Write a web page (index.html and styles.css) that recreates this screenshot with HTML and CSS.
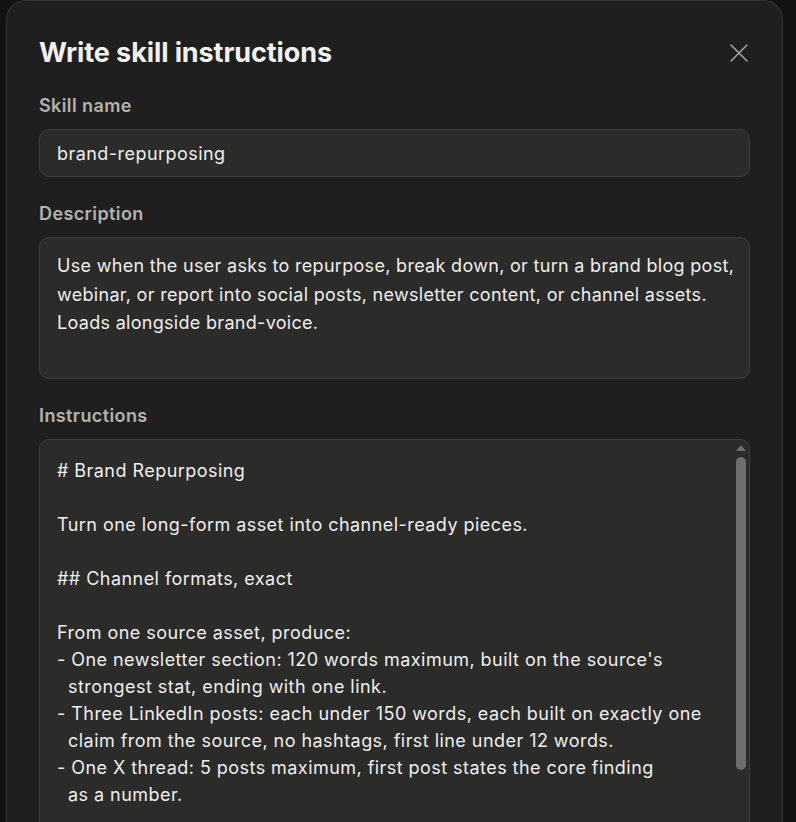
FILE: index.html
```html
<!DOCTYPE html>
<html lang="en">
<head>
    <meta charset="UTF-8">
    <title>Write skill instructions</title>
    <link rel="stylesheet" href="styles.css">
</head>
<body>
    <div class="modal">
        <div class="modal-header">
            <h1>Write skill instructions</h1>
            <button class="close-btn" aria-label="Close">
                <svg width="20" height="20" viewBox="0 0 20 20" fill="none" stroke="currentColor" stroke-width="1.5" stroke-linecap="round">
                    <path d="M2 2 L18 18 M18 2 L2 18"/>
                </svg>
            </button>
        </div>

        <label class="field-label" for="skillName">Skill name</label>
        <input id="skillName" class="field-input" type="text" value="brand-repurposing">

        <label class="field-label" for="skillDesc">Description</label>
        <textarea id="skillDesc" class="field-input desc">Use when the user asks to repurpose, break down, or turn a brand blog post, webinar, or report into social posts, newsletter content, or channel assets. Loads alongside brand-voice.</textarea>

        <label class="field-label" for="skillBody">Instructions</label>
        <div class="scroll-box">
            <textarea id="skillBody" class="field-input instructions"># Brand Repurposing

Turn one long-form asset into channel-ready pieces.

## Channel formats, exact

From one source asset, produce:
- One newsletter section: 120 words maximum, built on the source's
  strongest stat, ending with one link.
- Three LinkedIn posts: each under 150 words, each built on exactly one
  claim from the source, no hashtags, first line under 12 words.
- One X thread: 5 posts maximum, first post states the core finding
  as a number.

## Rules

- Never invent a stat that is not in the source.
- Keep the brand voice; load brand-voice first.
- Mark any claim that needs a citation.</textarea>
            <div class="scrollbar">
                <div class="scroll-arrow"></div>
                <div class="scroll-thumb"></div>
            </div>
        </div>
    </div>
</body>
</html>
```

FILE: styles.css
```css
body {
    margin: 0;
    background-color: #131313;
    font-family: 'Inter', 'Noto Sans', sans-serif;
    color: #ececec;
    height: 822px;
    overflow: hidden;
}
.modal {
    margin-left: 6px;
    width: 777px;
    height: 900px;
    box-sizing: border-box;
    padding: 0 32px;
    background-color: #1f1f1f;
    border: 1px solid #343434;
    border-bottom: none;
    border-radius: 20px 20px 0 0;
    display: flex;
    flex-direction: column;
}
.modal-header {
    display: flex;
    align-items: center;
    justify-content: space-between;
    padding-top: 35px;
    margin-bottom: 26px;
}
.modal-header h1 {
    margin: 0;
    font-size: 27px;
    font-weight: 700;
    color: #f2f2f2;
    letter-spacing: -0.1px;
}
.close-btn {
    background: none;
    border: none;
    padding: 0;
    margin-right: 1px;
    color: #a8a8a8;
    cursor: pointer;
    display: flex;
}
.field-label {
    font-size: 18px;
    font-weight: 600;
    color: #b3b3ae;
    letter-spacing: 0.4px;
    margin-bottom: 13px;
}
.field-input {
    width: 100%;
    box-sizing: border-box;
    background-color: #2b2b29;
    border: 1px solid #3e3e3c;
    border-radius: 10px;
    color: #eeeeee;
    font-family: 'Inter', 'Noto Sans', sans-serif;
    font-size: 18px;
    letter-spacing: 0.45px;
    padding: 0 17px;
    outline: none;
    margin: 0 0 26px;
}
input.field-input {
    height: 48px;
}
textarea.field-input {
    resize: none;
    display: block;
}
.desc {
    height: 142px;
    padding-top: 14px;
    padding-right: 4px;
    letter-spacing: 0.3px;
    line-height: 28.5px;
    overflow: hidden;
}
.scroll-box {
    position: relative;
}
.instructions {
    height: 420px;
    padding-top: 17px;
    line-height: 27px;
    white-space: pre-wrap;
    overflow: hidden;
}
.scrollbar {
    position: absolute;
    top: 6px;
    right: 4px;
    width: 10px;
    display: flex;
    flex-direction: column;
    align-items: center;
    gap: 6px;
}
.scroll-arrow {
    width: 0;
    height: 0;
    border-left: 5px solid transparent;
    border-right: 5px solid transparent;
    border-bottom: 6px solid #6e6e6b;
}
.scroll-thumb {
    width: 10px;
    height: 313px;
    border-radius: 5px;
    background-color: #6e6e6b;
}
```
